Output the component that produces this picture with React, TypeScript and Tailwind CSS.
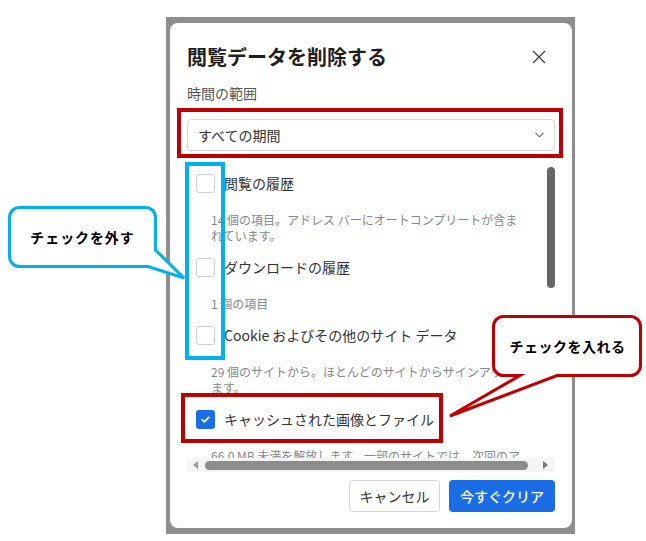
import React from "react";

function Box({ checked = false }: { checked?: boolean }) {
  if (checked) {
    return (
      <div className="w-[19px] h-[19px] rounded-[3px] bg-[#1b6de6] flex items-center justify-center shrink-0">
        <svg width="19" height="19" viewBox="0 0 19 19">
          <path d="M6 9.6 L8.4 11.9 L12.8 7.4" fill="none" stroke="#fff" strokeWidth="1.6" strokeLinecap="round" strokeLinejoin="round" />
        </svg>
      </div>
    );
  }
  return <div className="w-[19px] h-[19px] rounded-[3px] border border-[#cfd1d3] bg-white shrink-0" />;
}

function Row({ label, checked }: { label: string; checked?: boolean }) {
  return (
    <div className="flex items-center h-[20px]">
      <Box checked={checked} />
      <span className="ml-[9px] text-[14px] leading-[20px] text-[#333] whitespace-nowrap">{label}</span>
    </div>
  );
}

function Desc({ lines, mb }: { lines: string[]; mb?: boolean }) {
  return (
    <div className={`pl-[15px] mt-[19px] text-[12px] leading-[16px] text-[#85898e] ${mb ? "mb-[13px]" : ""}`}>
      {lines.map((l, i) => (
        <div key={i} className="whitespace-nowrap">{l}</div>
      ))}
    </div>
  );
}

export default function App() {
  return (
    <div className="relative w-[646px] h-[541px] bg-white overflow-hidden font-['Noto_Sans_CJK_JP',sans-serif]">
      <div className="pt-[17px] pl-[166px]">
        <div className="w-[409px] h-[517px] bg-[#8e8e8e] pl-[4px] pt-[6px]">
          <div className="w-[402px] h-[505px] bg-white rounded-[8px] flex flex-col px-[17px] pt-[20px]">
            <div className="flex items-center justify-between h-[28px]">
              <h2 className="text-[20px] leading-[28px] font-bold text-[#1f1f1f]">閲覧データを削除する</h2>
              <div className="w-[20px] h-[20px] mr-[6px] flex items-center justify-center">
                <svg width="14" height="14" viewBox="0 0 14 14">
                  <path d="M1 1 L13 13 M13 1 L1 13" stroke="#444" strokeWidth="1.4" />
                </svg>
              </div>
            </div>
            <div className="mt-[12px] h-[20px] text-[14px] leading-[20px] text-[#555]">時間の範囲</div>
            <div className="mt-[16px] h-[32px] border border-[#d6d8db] rounded-[4px] flex items-center justify-between pl-[10px] pr-[10px]">
              <span className="text-[14px] text-[#333]">すべての期間</span>
              <svg width="9" height="6" viewBox="0 0 9 6">
                <path d="M0.5 0.8 L4.5 4.8 L8.5 0.8" fill="none" stroke="#666" strokeWidth="1.1" />
              </svg>
            </div>
            <div className="mt-[9px] h-[312px] flex flex-col">
              <div className="h-[298px] flex">
                <div className="flex-1 overflow-hidden pt-[13px] pl-[9px]">
                  <Row label="閲覧の履歴" />
                  <Desc mb lines={["14 個の項目。アドレス バーにオートコンプリートが含ま", "れています。"]} />
                  <Row label="ダウンロードの履歴" />
                  <Desc mb lines={["1 個の項目"]} />
                  <Row label="Cookie およびその他のサイト データ" />
                  <Desc mb lines={["29 個のサイトから。ほとんどのサイトからサインアウトし", "ます。"]} />
                  <Row label="キャッシュされた画像とファイル" checked />
                  <Desc lines={["66.0 MB 未満を解放します。一部のサイトでは、次回のア"]} />
                </div>
                <div className="w-[8px] pt-[7px]">
                  <div className="h-[121px] rounded-full bg-[#666]" />
                </div>
              </div>
              <div className="h-[14px] bg-[#f5f5f5] flex items-center pl-[6px] pr-[7px]">
                <svg width="5" height="8" viewBox="0 0 5 8">
                  <path d="M5 0 L0 4 L5 8 Z" fill="#9a9a9a" />
                </svg>
                <div className="ml-[7px] w-[323px] h-[9px] rounded-full bg-[#8c8c8c]" />
                <div className="flex-1" />
                <svg width="5" height="8" viewBox="0 0 5 8">
                  <path d="M0 0 L5 4 L0 8 Z" fill="#777" />
                </svg>
              </div>
            </div>
            <div className="mt-[8px] flex justify-end gap-[9px]">
              <div className="w-[91px] h-[32px] border border-[#d6d8db] rounded-[4px] flex items-center justify-center text-[14px] text-[#333]">
                キャンセル
              </div>
              <div className="w-[106px] h-[32px] bg-[#1b6de6] rounded-[4px] flex items-center justify-center text-[14px] font-medium text-white">
                今すぐクリア
              </div>
            </div>
          </div>
        </div>
      </div>

      {/* highlight boxes */}
      <div className="absolute left-[177px] top-[108px] w-[386px] h-[50px] border-[4px] border-[#c00000]" />
      <div className="absolute left-[185px] top-[162px] w-[40px] h-[198px] border-[4px] border-[#00b0f0]" />
      <div className="absolute left-[181px] top-[393px] w-[262px] h-[50px] border-[4px] border-[#c00000]" />

      {/* callouts */}
      <svg className="absolute left-0 top-0 pointer-events-none" width="646" height="541" viewBox="0 0 646 541">
        <path
          d="M19.5 207.5 H145.5 A10 10 0 0 1 155.5 217.5 V250 L184 278 L148 266.5 H19.5 A10 10 0 0 1 9.5 256.5 V217.5 A10 10 0 0 1 19.5 207.5 Z"
          fill="#fff"
          stroke="#00b0f0"
          strokeWidth="3"
          strokeLinejoin="miter"
        />
        <path
          d="M503.5 316.5 H630.5 A10 10 0 0 1 640.5 326.5 V365.5 A10 10 0 0 1 630.5 375.5 H557 L450 416 L520 375.5 H503.5 A10 10 0 0 1 493.5 365.5 V326.5 A10 10 0 0 1 503.5 316.5 Z"
          fill="#fff"
          stroke="#c00000"
          strokeWidth="3"
          strokeLinejoin="miter"
        />
      </svg>
      <div className="absolute left-[9px] top-[207px] w-[147px] h-[60px] flex items-center justify-center text-[14px] font-bold tracking-[0.9px] text-black">
        チェックを外す
      </div>
      <div className="absolute left-[494px] top-[317px] w-[147px] h-[58px] flex items-center justify-center text-[14px] font-bold tracking-[0.5px] text-black">
        チェックを入れる
      </div>
    </div>
  );
}
